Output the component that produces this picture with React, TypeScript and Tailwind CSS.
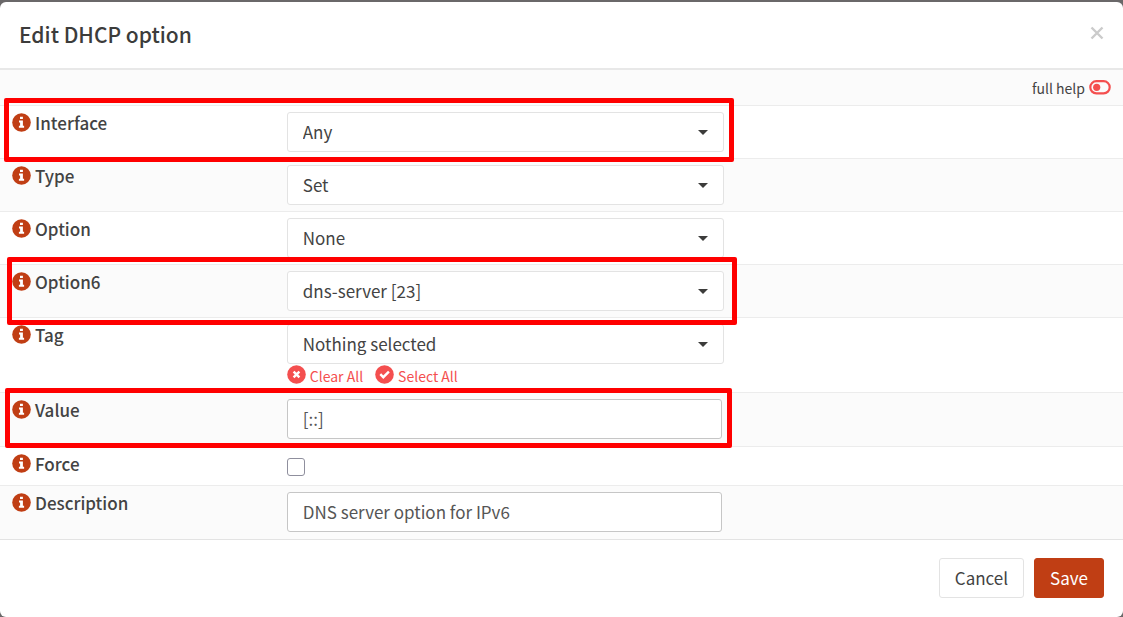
import React from "react";

type RowProps = {
  id: string;
  label: string;
  className?: string;
  // position classes of the red frame, when the row is marked
  mark?: string;
  children: React.ReactNode;
};

const InfoIcon = () => (
  <svg viewBox="0 0 19 19" className="size-[19px] shrink-0">
    <circle cx="9.5" cy="9.5" r="9.3" fill="#c03e14" />
    <path d="M8 3.8h2.9v2.3H8zM7 7.4h3.9v5.4h1.2v2H6.9v-2h1.2V9.4H7z" fill="#fff" />
  </svg>
);

const ClearIcon = () => (
  <svg viewBox="0 0 19 19" className="size-[19px] shrink-0">
    <circle cx="9.5" cy="9.5" r="9.3" fill="#f44f4f" />
    <path d="M6.6 6.6l5.8 5.8M12.4 6.6l-5.8 5.8" stroke="#fff" strokeWidth="2.4" />
  </svg>
);

const SelectIcon = () => (
  <svg viewBox="0 0 19 19" className="size-[19px] shrink-0">
    <circle cx="9.5" cy="9.5" r="9.3" fill="#f44f4f" />
    <path d="M5.3 9.2l3 3 5.6-5.6" stroke="#fff" strokeWidth="2.4" fill="none" />
  </svg>
);

const Row = ({ id, label, className = "", mark, children }: RowProps) => (
  <div className={`relative grid grid-cols-[25%_40%_35%] border-t border-[#ececec] odd:bg-white even:bg-[#fbfbfb] ${className}`}>
    <div className="flex items-start gap-1 pl-3 pt-[7px]">
      <InfoIcon />
      <label htmlFor={id} className="text-[17px] leading-5 font-medium">{label}</label>
    </div>
    <div className="px-1.5 pt-1.5">{children}</div>
    {mark && <div className={`pointer-events-none absolute z-10 rounded-xs border-[5px] border-[#ff0000] ${mark}`} />}
  </div>
);

const Select = ({ id, options }: { id: string; options: string[] }) => (
  <div className="relative">
    <select
      id={id}
      className="block h-10 w-full appearance-none rounded-[3px] border border-[#e3e3e3] bg-white px-[15px] text-[17px] leading-6 outline-none"
    >
      {options.map((option) => (
        <option key={option}>{option}</option>
      ))}
    </select>
    <svg viewBox="0 0 10 5" className="pointer-events-none absolute right-4 top-[18px] h-[5px] w-2.5 fill-[#3c3c3b]">
      <path d="M0 0h10L5 5z" />
    </svg>
  </div>
);

const TextInput = ({ id, value }: { id: string; value: string }) => (
  <input
    id={id}
    type="text"
    defaultValue={value}
    className="block h-10 w-[calc(100%-2px)] rounded-[3px] border border-[#c6c6c6] bg-white px-[15px] pb-0.5 text-[17px] leading-6 text-[#555555] outline-none"
  />
);

export default function App() {
  return (
    <div className="min-h-screen bg-[#6a6869] pt-0.5 font-['Noto_Sans_CJK_SC',sans-serif] text-[#434343]">
      <div role="dialog" aria-labelledby="dialog-title" className="rounded-md bg-white">
        <header className="flex items-start justify-between border-b-2 border-[#e8e8e8] px-[19px] pb-5 pt-[18px]">
          <h4 id="dialog-title" className="text-[21px] leading-7 font-medium text-[#3c3c3b]">Edit DHCP option</h4>
          <button type="button" aria-label="Close" className="pt-1.5 text-[#cbcbcb]">
            <svg viewBox="0 0 14 14" className="size-3.5" stroke="currentColor" strokeWidth="2.4">
              <path d="M1.5 1.5l11 11M12.5 1.5l-11 11" />
            </svg>
          </button>
        </header>

        <form>
          <div className="flex h-[35px] items-center justify-end bg-[#fbfbfb] pr-3">
            <a href="#" className="flex items-center gap-1">
              <span className="pt-px text-[14px] leading-5">full help</span>
              <svg viewBox="0 0 22 15" className="h-[15px] w-[22px] text-[#f44f4f]">
                <rect x="1.3" y="1.2" width="19.4" height="12.2" rx="6.1" fill="none" stroke="currentColor" strokeWidth="2.2" />
                <circle cx="7.7" cy="7.3" r="3.6" fill="currentColor" />
              </svg>
            </a>
          </div>

          <div>
            <Row id="interface" label="Interface" className="h-[53px]" mark="left-1 -top-2 h-16 w-[65%]">
              <Select id="interface" options={["Any"]} />
            </Row>
            <Row id="type" label="Type" className="h-[53px]">
              <Select id="type" options={["Set", "Match"]} />
            </Row>
            <Row id="option" label="Option" className="h-[53px]">
              <Select id="option" options={["None"]} />
            </Row>
            <Row id="option6" label="Option6" className="h-[53px]" mark="left-[7px] -top-2 h-[68px] w-[65%]">
              <Select id="option6" options={["dns-server [23]"]} />
            </Row>
            <Row id="tag" label="Tag" className="h-[75px]">
              <Select id="tag" options={["Nothing selected"]} />
              <div className="flex gap-3 pt-px text-[14px] leading-5 text-[#f44f4f]">
                <a href="#" className="flex gap-1">
                  <ClearIcon />
                  <span className="pt-px">Clear All</span>
                </a>
                <a href="#" className="flex gap-1">
                  <SelectIcon />
                  <span className="pt-px">Select All</span>
                </a>
              </div>
            </Row>
            <Row id="value" label="Value" className="h-[54px]" mark="left-[5px] -top-[5px] h-[60px] w-[calc(65%-3px)]">
              <TextInput id="value" value="[::]" />
            </Row>
            <Row id="force" label="Force" className="h-[39px]">
              <input
                id="force"
                type="checkbox"
                className="mt-[5px] block size-[18px] appearance-none rounded-[3px] border border-[#8f8f9d] bg-white checked:bg-[#c03e14]"
              />
            </Row>
            <Row id="description" label="Description" className="h-[54px]">
              <TextInput id="description" value="DNS server option for IPv6" />
            </Row>
          </div>
        </form>

        <footer className="flex justify-end gap-2.5 border-t border-[#e3e3e3] px-[19px] pb-[19px] pt-[18px]">
          <button type="button" className="h-10 rounded-[3px] border border-[#e3e3e3] bg-white px-[15px] text-[17px] leading-6">
            Cancel
          </button>
          <button type="button" className="h-10 rounded-[3px] border border-[#c03e14] bg-[#c03e14] px-[15px] text-[17px] leading-6 text-white">
            Save
          </button>
        </footer>
      </div>
    </div>
  );
}
